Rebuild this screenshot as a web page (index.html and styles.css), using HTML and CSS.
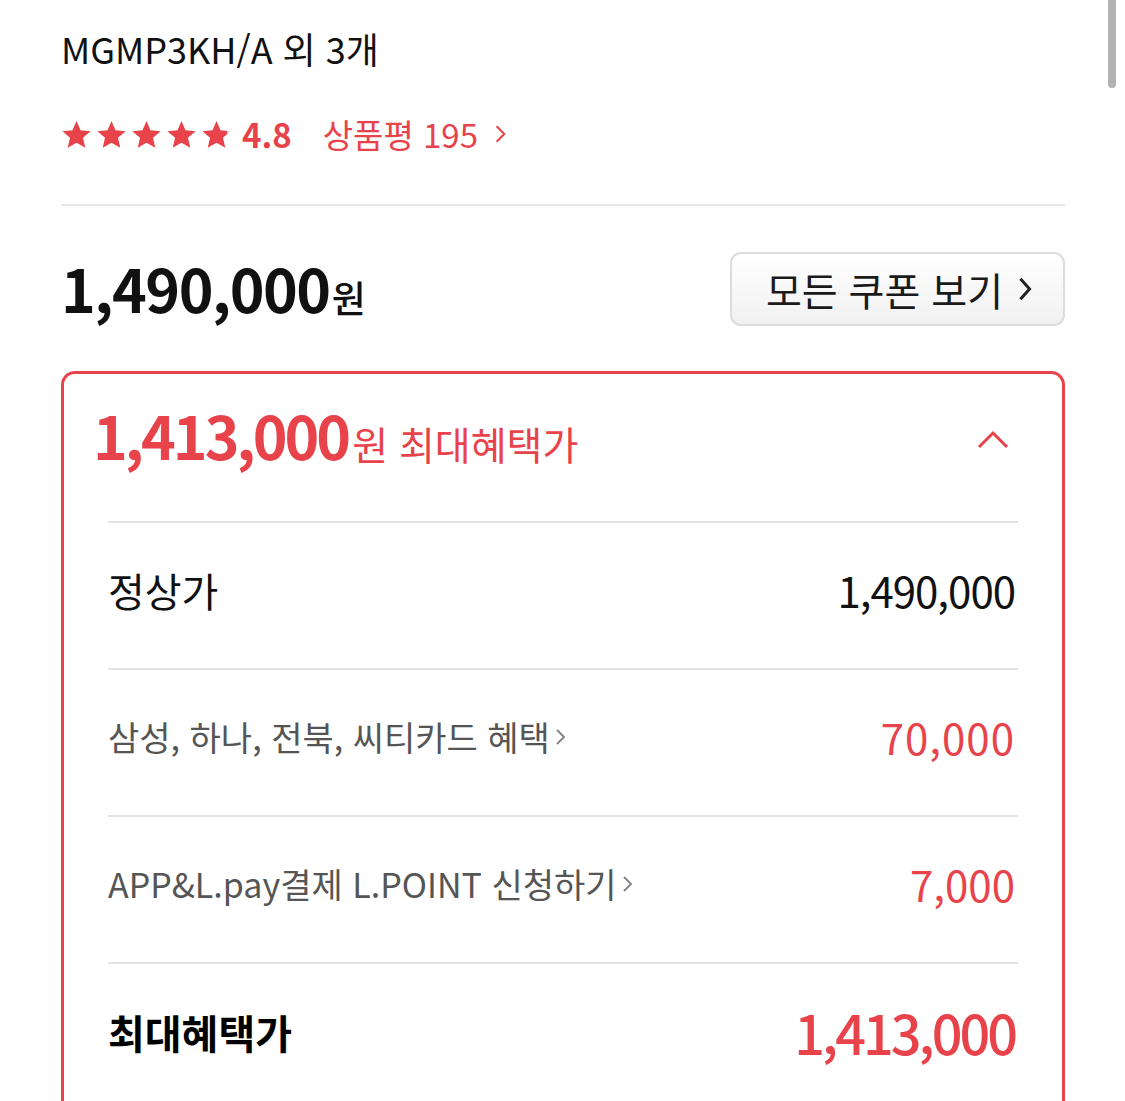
FILE: index.html
```html
<!DOCTYPE html>
<html lang="ko">
<head>
<meta charset="utf-8">
<link rel="stylesheet" href="styles.css">
</head>
<body>
<div class="scrollbar"></div>
<main class="page">
  <h1 class="title">MGMP3KH/A 외 3개</h1>
  <div class="rating">
    <div class="stars">
      <svg class="star" viewBox="0 0 24 24"><path d="M12 1.5l3.1 7.2 7.8.7-5.9 5.2 1.8 7.7L12 18.3 5.2 22.3 7 14.6 1.1 9.4l7.8-.7z" fill="#e8434b"/></svg>
      <svg class="star" viewBox="0 0 24 24"><path d="M12 1.5l3.1 7.2 7.8.7-5.9 5.2 1.8 7.7L12 18.3 5.2 22.3 7 14.6 1.1 9.4l7.8-.7z" fill="#e8434b"/></svg>
      <svg class="star" viewBox="0 0 24 24"><path d="M12 1.5l3.1 7.2 7.8.7-5.9 5.2 1.8 7.7L12 18.3 5.2 22.3 7 14.6 1.1 9.4l7.8-.7z" fill="#e8434b"/></svg>
      <svg class="star" viewBox="0 0 24 24"><path d="M12 1.5l3.1 7.2 7.8.7-5.9 5.2 1.8 7.7L12 18.3 5.2 22.3 7 14.6 1.1 9.4l7.8-.7z" fill="#e8434b"/></svg>
      <svg class="star" viewBox="0 0 24 24"><defs><linearGradient id="part"><stop offset="0.86" stop-color="#e8434b"/><stop offset="0.86" stop-color="#d6d6d6"/></linearGradient></defs><path d="M12 1.5l3.1 7.2 7.8.7-5.9 5.2 1.8 7.7L12 18.3 5.2 22.3 7 14.6 1.1 9.4l7.8-.7z" fill="url(#part)"/></svg>
    </div>
    <span class="score">4.8</span>
    <a class="reviews">상품평 195 <svg class="rv-chev" viewBox="0 0 12 20"><path d="M2 3l7 7-7 7" fill="none" stroke="#e8434b" stroke-width="1.8"/></svg></a>
  </div>
  <hr class="divider">
  <div class="price-row">
    <div class="price"><span class="num">1,490,000</span><span class="won">원</span></div>
    <button class="coupon">모든 쿠폰 보기 <svg class="cp-chev" viewBox="0 0 14 24"><path d="M3 3l8 9-8 9" fill="none" stroke="#222" stroke-width="2.6"/></svg></button>
  </div>
  <section class="card">
    <div class="card-head">
      <div class="best"><span class="num">1,413,000</span><span class="won">원 최대혜택가</span></div>
      <svg class="up" viewBox="0 0 32 20"><path d="M2 17L16 3l14 14" fill="none" stroke="#e8434b" stroke-width="3"/></svg>
    </div>
    <div class="rows">
      <div class="row">
        <span class="label">정상가</span>
        <span class="value tight">1,490,000</span>
      </div>
      <div class="row">
        <span class="label sub">삼성, 하나, 전북, 씨티카드 혜택<svg class="row-chev" viewBox="0 0 12 20"><path d="M2 3l7 7-7 7" fill="none" stroke="#888" stroke-width="2"/></svg></span>
        <span class="value red wide">70,000</span>
      </div>
      <div class="row">
        <span class="label sub">APP&amp;L.pay결제 L.POINT 신청하기<svg class="row-chev" viewBox="0 0 12 20"><path d="M2 3l7 7-7 7" fill="none" stroke="#888" stroke-width="2"/></svg></span>
        <span class="value red">7,000</span>
      </div>
      <div class="row total">
        <span class="label strong">최대혜택가</span>
        <span class="value red big">1,413,000</span>
      </div>
    </div>
  </section>
</main>
</body>
</html>
```

FILE: styles.css
```css
* { box-sizing: border-box; }
html, body {
  margin: 0;
  background: #fff;
  overflow: hidden;
}
body {
  font-family: "Noto Sans CJK KR", "Noto Sans", sans-serif;
  color: #111;
}
.scrollbar {
  position: fixed;
  top: 0;
  right: 9px;
  width: 8px;
  height: 88px;
  background: #b3b3b3;
  border-radius: 0 0 4px 4px;
}
.page {
  padding: 23px 60px 0 61px;
}
.title {
  margin: 0;
  font-size: 36px;
  font-weight: 400;
  line-height: 50px;
  color: #111;
}
.rating {
  margin-top: 36px;
  height: 50px;
  display: flex;
  align-items: center;
  color: #e8434b;
}
.stars {
  display: flex;
  gap: 4px;
}
.star {
  width: 31px;
  height: 31px;
}
.score {
  margin-left: 10px;
  font-size: 33px;
  font-weight: 700;
}
.reviews {
  margin-left: 31px;
  font-size: 33px;
  display: flex;
  align-items: center;
}
.rv-chev {
  width: 14px;
  height: 22px;
  margin-left: 16px;
}
.divider {
  margin: 45px 0 0;
  border: 0;
  height: 2px;
  background: #e8e8e8;
}
.price-row {
  margin-top: 46px;
  height: 74px;
  display: flex;
  justify-content: space-between;
  align-items: center;
}
.price {
  display: flex;
  align-items: baseline;
  line-height: 1;
  padding-bottom: 4px;
}
.price .num {
  font-size: 59px;
  font-weight: 700;
  letter-spacing: -1.5px;
}
.price .won {
  font-size: 37px;
  font-weight: 500;
  margin-left: 2px;
}
.coupon {
  width: 335px;
  height: 74px;
  border: 2px solid #dcdcdc;
  border-radius: 11px;
  background: linear-gradient(#ffffff, #f1f1f1);
  font-family: inherit;
  font-size: 39px;
  color: #1a1a1a;
  display: flex;
  align-items: center;
  justify-content: center;
  padding: 0 0 0 4px;
}
.cp-chev {
  width: 16px;
  height: 28px;
  margin-left: 14px;
}
.card {
  margin-top: 45px;
  border: 3px solid #e8434b;
  border-radius: 14px;
  border-bottom: 0;
  border-bottom-left-radius: 0;
  border-bottom-right-radius: 0;
}
.card-head {
  display: flex;
  justify-content: space-between;
  align-items: center;
  padding: 0 53px 26px 29px;
  height: 147px;
}
.best {
  display: flex;
  align-items: baseline;
  color: #e8434b;
  line-height: 1;
}
.best .num {
  font-size: 59px;
  font-weight: 700;
  letter-spacing: -3px;
}
.best .won {
  font-size: 39px;
  margin-left: 4px;
}
.up {
  width: 32px;
  height: 20px;
  margin-top: 10px;
}
.rows {
  margin: 0 44px;
}
.row {
  height: 147px;
  border-top: 2px solid #e3e3e3;
  display: flex;
  justify-content: space-between;
  align-items: center;
  padding-right: 3px;
  padding-bottom: 12px;
}
.label {
  font-size: 40px;
  display: flex;
  align-items: center;
}
.label.sub {
  font-size: 34px;
  color: #555;
}
.label.strong {
  font-weight: 700;
  color: #000;
}
.row-chev {
  width: 12px;
  height: 20px;
  margin-left: 5px;
}
.value {
  font-size: 42px;
}
.value.tight {
  letter-spacing: -1px;
}
.value.wide {
  letter-spacing: 1px;
}
.value.red {
  color: #e8434b;
}
.value.big {
  font-size: 54px;
  font-weight: 500;
  letter-spacing: -3px;
}
.row.total {
  padding-bottom: 10px;
}
```
